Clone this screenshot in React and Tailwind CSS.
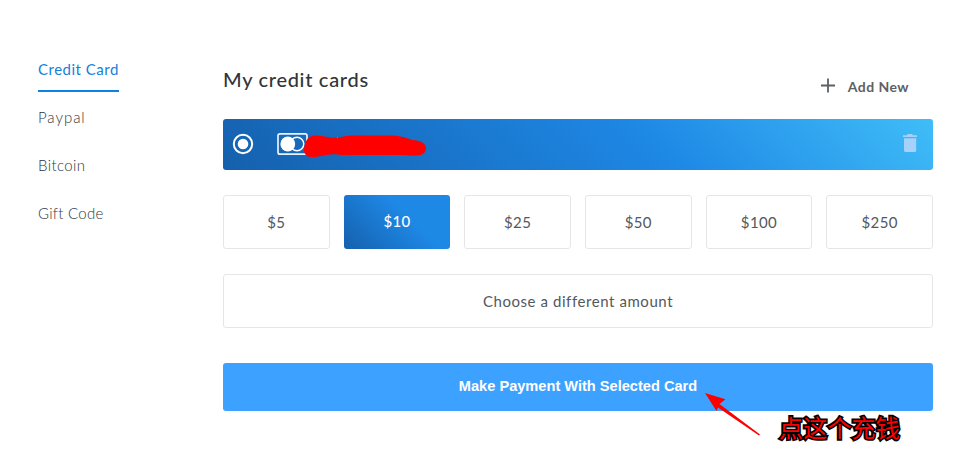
const methods = [
  { name: 'Paypal', spacing: 'tracking-[0.95px]' },
  { name: 'Bitcoin', spacing: 'tracking-[0.4px]' },
  { name: 'Gift Code', spacing: 'tracking-[0.3px]' },
];
const amounts = ['$5', '$10', '$25', '$50', '$100', '$250'];

function Sidebar() {
  return (
    <nav className="flex w-[185px] shrink-0 flex-col items-start pt-[57px] text-[15px] leading-6">
      <a className="h-[35px] border-b-2 border-[#0c83e2] tracking-[0.5px] whitespace-nowrap text-[#1581dc]">Credit Card</a>
      {methods.map((m) => (
        <a key={m.name} className={`mt-[13px] h-[35px] font-light whitespace-nowrap text-[#30363b] ${m.spacing}`}>
          {m.name}
        </a>
      ))}
    </nav>
  );
}

function SavedCard() {
  return (
    <div className="flex h-[51px] items-center rounded-[3px] bg-[linear-gradient(45deg,#1560ad_0%,#1e88e5_60%,#40bdf8_100%)] pr-[14px] pb-[2px] pl-[9px]">
      <svg width="22" height="22" viewBox="0 0 22 22">
        <circle cx="11" cy="11" r="9.2" fill="none" stroke="#fff" strokeWidth="2" />
        <circle cx="11" cy="11" r="5.3" fill="#fff" />
      </svg>
      <div className="relative ml-[23px] h-[24px] w-[150px]">
        <svg width="150" height="24" viewBox="0 0 150 24" className="block overflow-visible">
          <rect x="1" y="1.8" width="29" height="20.4" rx="2" fill="none" stroke="#e8f2fc" strokeWidth="1.7" />
          <circle cx="20" cy="12" r="6.8" fill="none" stroke="#fff" strokeWidth="1.5" />
          <circle cx="10.8" cy="12" r="7.4" fill="#fff" />
          <path d="M60 5.5h1M65 5.5h1" stroke="#d7e8f8" strokeWidth="1" />
          <path
            d="M35 4C41 2.500 48 5 54 5.500C62 6.500 67 3.500 76 3.500H112C122 3.500 128 5 135 8C144 8 149 12 149 16C149 21 145 24 138 23.500C132 24 127 22.500 121 23H64C56 21 46 24 41 24.500C34 26 27 25 27 18C27 12 30 5 35 4Z"
            fill="#fe0000"
          />
        </svg>
      </div>
      <svg className="ml-auto" width="17" height="20" viewBox="0 0 17 20">
        <path d="M1 1.200h4.500V0h5v1.200H15v1.900H1zM2 4.200h12.200v12.200q0 1.600-1.600 1.600h-9q-1.600 0-1.600-1.600z" fill="#a5d1fb" />
      </svg>
    </div>
  );
}

export default function App() {
  return (
    <div className="relative flex h-[457px] w-[978px] overflow-hidden bg-white pl-[38px] font-[Lato,'Liberation_Sans',sans-serif]">
      <Sidebar />
      <main className="w-[710px] shrink-0">
        <header className="flex h-[119px] justify-between pr-[24px]">
          <h1 className="pt-[64px] text-[20px] leading-[30px] font-medium tracking-[0.7px] text-[#30363b]">My credit cards</h1>
          <button className="mt-[76px] flex h-[20px] items-center gap-[12px] text-[14px] font-bold tracking-[0.45px] text-[#5c6166]">
            <svg width="16" height="16" viewBox="0 0 16 16">
              <path d="M8 .5v14M1 7.500h14" stroke="#5c6166" strokeWidth="1.8" />
            </svg>
            <span className="pt-px whitespace-nowrap">Add New</span>
          </button>
        </header>
        <SavedCard />
        <div className="mt-[25px] grid grid-cols-6 gap-[14px]">
          {amounts.map((a) => (
            <button
              key={a}
              className={
                a === '$10'
                  ? 'h-[54px] rounded-[3px] bg-[linear-gradient(45deg,#1560ad_0%,#1e88e5_60%)] pb-px text-[15px] font-medium tracking-[0.3px] text-white'
                  : 'h-[54px] rounded-[3px] border border-[#e4e6e8] pt-px text-[15px] tracking-[0.4px] text-[#53585d]'
              }
            >
              {a}
            </button>
          ))}
        </div>
        <button className="mt-[25px] block h-[54px] w-full rounded-[3px] border border-[#e4e6e8] text-[15px] tracking-[0.57px] text-[#53585d]">
          Choose a different amount
        </button>
        <button className="mt-[35px] block h-[48px] w-full rounded-[3px] bg-[#3da1ff] font-['Liberation_Sans',Arial,sans-serif] text-[14.6px] font-bold text-white">
          Make Payment With Selected Card
        </button>
      </main>
      <svg className="absolute top-[390px] left-[700px]" width="64" height="48" viewBox="0 0 64 48">
        <path d="M5 3 25.500 9.200 19.500 14 60 44.500 59 45.500 18 17.500 16.500 21Z" fill="#fe0000" />
      </svg>
      <div className="absolute top-[410px] left-[779px] font-['Noto_Sans_CJK_SC',sans-serif] text-[24px] leading-[34px] font-normal tracking-[0.2px] whitespace-nowrap text-[#fe0000] [-webkit-text-stroke:3.4px_#000] [paint-order:stroke_fill]">
        点这个充钱
      </div>
    </div>
  );
}
